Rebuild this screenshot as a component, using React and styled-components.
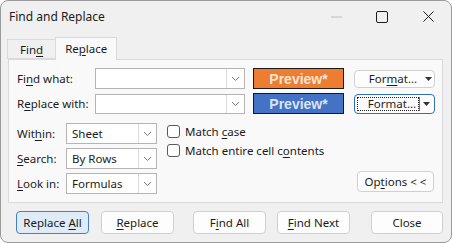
import React from 'react'
import styled, { createGlobalStyle } from 'styled-components'

const GlobalStyle = createGlobalStyle`
  html, body {
    margin: 0;
    padding: 0;
    background: #ffffff;
  }
  body {
    font-family: "Noto Sans", "Open Sans", sans-serif;
    font-size: 11.5px;
    color: #1b1b1b;
  }
`

const Window = styled.div`
  box-sizing: border-box;
  width: 452px;
  height: 243px;
  background: #f0f0f0;
  border: 1px solid #9a9a9a;
  border-radius: 8px;
  overflow: hidden;
  display: flex;
  flex-direction: column;
`

const TitleBar = styled.div`
  height: 31px;
  display: flex;
  align-items: center;
  padding-left: 8px;
  flex-shrink: 0;
`

const Title = styled.div`
  flex: 1;
  font-size: 12px;
  color: #1b1b1b;
`

const WinButton = styled.div`
  width: 46px;
  height: 31px;
  display: flex;
  align-items: center;
  justify-content: center;
`

const Tabs = styled.div`
  display: flex;
  align-items: flex-end;
  height: 22px;
  margin-top: 5px;
  padding-left: 6px;
  position: relative;
  z-index: 1;
`

const Tab = styled.div`
  box-sizing: border-box;
  height: ${p => (p.$active ? '23px' : '20px')};
  padding: 0 ${p => (p.$active ? '9px' : '12px')};
  display: flex;
  align-items: center;
  padding-bottom: ${p => (p.$active ? '2px' : '0')};
  background: ${p => (p.$active ? '#f9f9f9' : '#f0f0f0')};
  border: 1px solid #dadada;
  border-bottom: ${p => (p.$active ? 'none' : '1px solid #dadada')};
  margin-bottom: ${p => (p.$active ? '-1px' : '0')};
  ${p => !p.$active && 'border-right: none;'}
`

const Panel = styled.div`
  box-sizing: border-box;
  margin: 0 8px 0 7px;
  height: 144px;
  background: #f9f9f9;
  border: 1px solid #dadada;
  padding: 8px 8px 0 8px;
  display: flex;
  flex-direction: column;
`

const TopGrid = styled.div`
  display: grid;
  grid-template-columns: 70px 150px 91px 83px;
  column-gap: 8px;
  row-gap: 4px;
  align-items: center;
`

const Label = styled.div`
  white-space: nowrap;
`

const Combo = styled.div`
  box-sizing: border-box;
  width: ${p => p.$w}px;
  height: ${p => p.$h || 21}px;
  display: flex;
  align-items: center;
  background: #ffffff;
  border: 1px solid #b4b4b4;
`

const ComboText = styled.div`
  flex: 1;
  padding-left: 5px;
  white-space: nowrap;
`

const ComboArrow = styled.div`
  box-sizing: border-box;
  width: 18px;
  height: 100%;
  border-left: 1px solid #dcdcdc;
  display: flex;
  align-items: center;
  justify-content: center;
`

const Preview = styled.div`
  box-sizing: border-box;
  height: 21px;
  background: ${p => p.$bg};
  border: 1px solid #1a1a1a;
  color: ${p => p.$fg};
  font-family: "Liberation Sans", Arial, sans-serif;
  font-weight: bold;
  font-size: 14px;
  display: flex;
  align-items: center;
  justify-content: center;
`

const FormatButton = styled.div`
  box-sizing: border-box;
  height: ${p => (p.$focused ? '20px' : '18px')};
  width: 81px;
  margin-left: 2px;
  background: #fdfdfd;
  border: 1px solid ${p => (p.$focused ? '#2f6fb8' : '#d0d0d0')};
  border-radius: 4px;
  display: flex;
  align-items: stretch;
  padding: ${p => (p.$focused ? '2px' : '0')};
`

const FormatLabel = styled.div`
  flex: 1;
  display: flex;
  align-items: center;
  justify-content: center;
  padding-left: ${p => (p.$focused ? '8px' : '10px')};
  border: 1px dotted ${p => (p.$focused ? '#222' : 'transparent')};
`

const FormatDrop = styled.div`
  width: 12px;
  display: flex;
  align-items: center;
  justify-content: center;
  border-left: 1px solid ${p => (p.$focused ? '#777' : 'transparent')};
`

const Lower = styled.div`
  display: flex;
  margin-top: 9px;
  flex: 1;
`

const LowerGrid = styled.div`
  display: grid;
  grid-template-columns: 49px 91px;
  row-gap: 4px;
  align-items: center;
  align-content: start;
`

const Checks = styled.div`
  display: flex;
  flex-direction: column;
  gap: 5px;
  margin-left: 10px;
  padding-top: 1px;
`

const CheckRow = styled.label`
  display: flex;
  align-items: center;
  gap: 5px;
  height: 14px;
`

const Box = styled.span`
  box-sizing: border-box;
  width: 13px;
  height: 13px;
  border: 1px solid #5a5a5a;
  border-radius: 3px;
  background: #ffffff;
`

const Spacer = styled.div`
  flex: 1;
`

const Button = styled.div`
  box-sizing: border-box;
  width: ${p => p.$w}px;
  height: ${p => p.$h || 23}px;
  background: ${p => (p.$primary ? '#dfecf8' : '#fdfdfd')};
  border: 1px solid ${p => (p.$primary ? '#3f82c8' : '#d0d0d0')};
  border-radius: 4px;
  display: flex;
  align-items: center;
  justify-content: center;
  white-space: nowrap;
`

const OptionsWrap = styled.div`
  align-self: flex-start;
  margin-top: 48px;
`

const Footer = styled.div`
  display: flex;
  padding: 8px 0 0 15px;
`

const ButtonGroup = styled.div`
  display: flex;
  gap: ${p => p.$gap}px;
  margin-left: ${p => p.$offset || 0}px;
`

const U = styled.span`
  text-decoration: underline;
  text-underline-offset: 2px;
`

const Chevron = () => (
  <svg width="9" height="6" viewBox="0 0 9 6">
    <path d="M1 1 L4.5 4.5 L8 1" fill="none" stroke="#7a7a7a" strokeWidth="1" />
  </svg>
)

const Caret = () => (
  <svg width="7" height="4" viewBox="0 0 7 4">
    <path d="M0 0 H7 L3.5 4 Z" fill="#333" />
  </svg>
)

function DropCombo({ w, h, text }) {
  return (
    <Combo $w={w} $h={h}>
      <ComboText>{text}</ComboText>
      <ComboArrow>
        <Chevron />
      </ComboArrow>
    </Combo>
  )
}

export default function App() {
  return (
    <>
      <GlobalStyle />
      <Window>
        <TitleBar>
          <Title>Find and Replace</Title>
          <WinButton>
            <svg width="11" height="2" viewBox="0 0 11 2">
              <path d="M0 1 H11" stroke="#bdbdbd" strokeWidth="1" />
            </svg>
          </WinButton>
          <WinButton>
            <svg width="12" height="12" viewBox="0 0 12 12">
              <rect x="0.5" y="0.5" width="11" height="11" rx="1.5" fill="none" stroke="#1b1b1b" strokeWidth="1" />
            </svg>
          </WinButton>
          <WinButton>
            <svg width="11" height="11" viewBox="0 0 11 11">
              <path d="M0.5 0.5 L10.5 10.5 M10.5 0.5 L0.5 10.5" stroke="#1b1b1b" strokeWidth="1" />
            </svg>
          </WinButton>
        </TitleBar>

        <Tabs>
          <Tab>
            <span>Fin<U>d</U></span>
          </Tab>
          <Tab $active>
            <span>Re<U>p</U>lace</span>
          </Tab>
        </Tabs>

        <Panel>
          <TopGrid>
            <Label>
              Fi<U>n</U>d what:
            </Label>
            <DropCombo w={150} h={21} text="" />
            <Preview $bg="#ed7d31" $fg="#fbe5d6">Preview*</Preview>
            <FormatButton>
              <FormatLabel>
                <span>For<U>m</U>at...</span>
              </FormatLabel>
              <FormatDrop>
                <Caret />
              </FormatDrop>
            </FormatButton>

            <Label>
              R<U>e</U>place with:
            </Label>
            <DropCombo w={150} h={20} text="" />
            <Preview $bg="#4472c4" $fg="#dae3f3">Preview*</Preview>
            <FormatButton $focused>
              <FormatLabel $focused>Format...</FormatLabel>
              <FormatDrop $focused>
                <Caret />
              </FormatDrop>
            </FormatButton>
          </TopGrid>

          <Lower>
            <LowerGrid>
              <Label>
                Wit<U>h</U>in:
              </Label>
              <DropCombo w={91} h={21} text="Sheet" />
              <Label>
                <U>S</U>earch:
              </Label>
              <DropCombo w={91} h={21} text="By Rows" />
              <Label>
                <U>L</U>ook in:
              </Label>
              <DropCombo w={91} h={21} text="Formulas" />
            </LowerGrid>
            <Checks>
              <CheckRow>
                <Box />
                <span>
                  Match <U>c</U>ase
                </span>
              </CheckRow>
              <CheckRow>
                <Box />
                <span>
                  Match entire cell c<U>o</U>ntents
                </span>
              </CheckRow>
            </Checks>
            <Spacer />
            <OptionsWrap>
              <Button $w={77} $h={21}>
                <span>Op<U>t</U>ions &lt; &lt;</span>
              </Button>
            </OptionsWrap>
          </Lower>
        </Panel>

        <Footer>
          <ButtonGroup $gap={12}>
            <Button $w={73} $primary>
              <span>Replace <U>A</U>ll</span>
            </Button>
            <Button $w={73}>
              <span><U>R</U>eplace</span>
            </Button>
          </ButtonGroup>
          <ButtonGroup $gap={11} $offset={19}>
            <Button $w={73}>
              <span>F<U>i</U>nd All</span>
            </Button>
            <Button $w={73}>
              <span><U>F</U>ind Next</span>
            </Button>
          </ButtonGroup>
          <ButtonGroup $gap={0} $offset={21}>
            <Button $w={72}>Close</Button>
          </ButtonGroup>
        </Footer>
      </Window>
    </>
  )
}
